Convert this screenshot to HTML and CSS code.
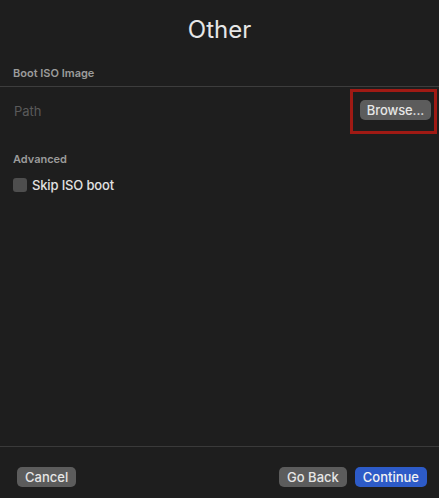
FILE: index.html
```html
<!DOCTYPE html>
<html>
<head>
<meta charset="utf-8">
<link rel="stylesheet" href="styles.css">
</head>
<body>
<div class="window">
  <h1 class="title">Other</h1>
  <div class="content">
    <div class="section-label">Boot ISO Image</div>
    <div class="path-row">
      <span class="path-placeholder">Path</span>
      <button class="btn btn-browse">Browse...</button>
      <div class="highlight"></div>
    </div>
    <div class="section-label advanced">Advanced</div>
    <label class="check-row">
      <span class="checkbox"></span>
      <span class="check-text">Skip ISO boot</span>
    </label>
  </div>
  <div class="footer">
    <button class="btn">Cancel</button>
    <div class="footer-right">
      <button class="btn">Go Back</button>
      <button class="btn btn-primary">Continue</button>
    </div>
  </div>
</div>
</body>
</html>
```
FILE: styles.css
```css
html, body {
  margin: 0;
  padding: 0;
  background: #1e1e1e;
}
body {
  font-family: Inter, "Noto Sans", "Liberation Sans", sans-serif;
  color: #e2e2e2;
}
.window {
  width: 439px;
  height: 498px;
  display: flex;
  flex-direction: column;
}
.title {
  margin: 0;
  height: 56px;
  line-height: 59px;
  text-align: center;
  font-size: 24px;
  font-weight: 400;
  color: #e6e6e6;
}
.content {
  flex: 1;
  display: flex;
  flex-direction: column;
}
.section-label {
  padding: 0 13px;
  font-size: 11px;
  font-weight: 600;
  line-height: 14px;
  color: #9b9b9b;
  margin-top: 10px;
  margin-bottom: 6px;
}
.path-row {
  position: relative;
  border-top: 1px solid #3d3d3d;
  height: 47px;
  display: flex;
  align-items: center;
  justify-content: space-between;
  padding: 0 8px 0 14px;
}
.path-placeholder {
  font-size: 13px;
  color: #5a5a5a;
  margin-top: 0;
}
.btn {
  font-family: inherit;
  font-size: 13px;
  font-weight: 500;
  color: #e6e6e6;
  background: #5c5c5c;
  border: none;
  border-radius: 5px;
  height: 20px;
  line-height: 20px;
  padding: 0 8px;
  margin: 0;
}
.btn-browse {
  width: 71px;
  padding: 0;
  margin-top: -1px;
  letter-spacing: -0.1px;
}
.highlight {
  position: absolute;
  left: 350px;
  top: 2px;
  width: 81px;
  height: 39px;
  border: 3px solid #a01a14;
}
.advanced {
  margin-top: 18px;
  margin-bottom: 11px;
}
.check-row {
  display: flex;
  align-items: center;
  gap: 5px;
  padding: 0 13px;
  font-size: 13px;
  font-weight: 500;
  letter-spacing: -0.15px;
  color: #e2e2e2;
}
.checkbox {
  width: 14px;
  height: 14px;
  border-radius: 3px;
  background: #4e4e4e;
  box-sizing: border-box;
}
.footer {
  border-top: 1px solid #3a3a3a;
  height: 52px;
  display: flex;
  align-items: center;
  justify-content: space-between;
  padding: 0 12px 0 17px;
  box-sizing: border-box;
}
.footer .btn {
  margin-top: 8px;
}
.footer-right {
  display: flex;
  gap: 8px;
}
.btn-primary {
  background: #2d5bc8;
  color: #f2f2f2;
}
```
